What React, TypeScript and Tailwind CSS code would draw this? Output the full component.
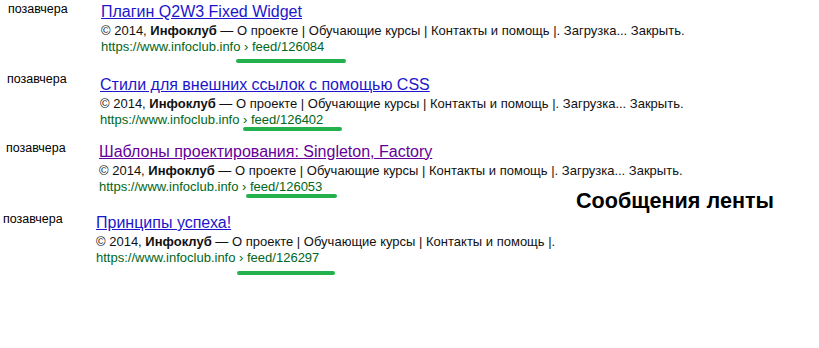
import React from 'react';

interface FeedItem {
  title: string;
  feed: string;
  visited?: boolean;
  short?: boolean;
  offset: string;
  gap: string;
  date: string;
  mark: string;
}

// each row was cut from a separate screenshot, so the offsets drift a little
const ITEMS: FeedItem[] = [
  { title: 'Плагин Q2W3 Fixed Widget', feed: '126084', offset: 'pl-[8px]', gap: 'mt-[3px]', date: 'mt-[-1px]', mark: 'mt-[4px] ml-[135px] w-[110px]' },
  { title: 'Стили для внешних ссылок с помощью CSS', feed: '126402', offset: 'pl-[7px]', gap: 'mt-[13px]', date: 'mt-[-4px]', mark: 'mt-[-1px] ml-[143px] w-[99px]' },
  { title: 'Шаблоны проектирования: Singleton, Factory', feed: '126053', visited: true, offset: 'pl-[6px]', gap: 'mt-[12px]', date: 'mt-[-2px]', mark: 'mt-[-1px] ml-[147px] w-[91px]' },
  { title: 'Принципы успеха!', feed: '126297', short: true, offset: 'pl-[3px]', gap: 'mt-[16px]', date: 'mt-[-2px]', mark: 'mt-[5px] ml-[141px] w-[98px]' },
];

const Result: React.FC<{ item: FeedItem }> = ({ item }) => (
  <div className={`flex items-start ${item.offset} ${item.gap}`}>
    <div className={`w-[93px] shrink-0 text-[12.5px] leading-[15px] text-black ${item.date}`}>позавчера</div>
    <div className="flex flex-col whitespace-nowrap">
      <a
        href="#"
        className={`text-[16px] leading-[18px] underline ${item.visited ? 'text-[#660099]' : 'text-[#1c16cc]'}`}
      >
        {item.title}
      </a>
      <div className="mt-[2px] text-[13px] leading-[16px] text-[#111]">
        © 2014, <b>Инфоклуб</b> — О проекте | Обучающие курсы | Контакты и помощь{' '}
        {item.short ? '|.' : <>|. Загрузка... Закрыть.</>}
      </div>
      <div className="text-[13px] leading-[16px] text-[#006621]">
        https://www.infoclub.info › feed/{item.feed}
      </div>
      <div className={`h-[4px] rounded-full bg-[#22b14c] ${item.mark}`} />
    </div>
  </div>
);

export default function App() {
  return (
    <div className="relative h-[348px] w-[819px] bg-white font-['Liberation_Sans',Arial,sans-serif]">
      {ITEMS.map((item) => (
        <Result key={item.feed} item={item} />
      ))}
      <div className="absolute left-[576px] top-[186px] text-[21.6px] leading-[24px] font-bold text-black">
        Сообщения ленты
      </div>
    </div>
  );
}
